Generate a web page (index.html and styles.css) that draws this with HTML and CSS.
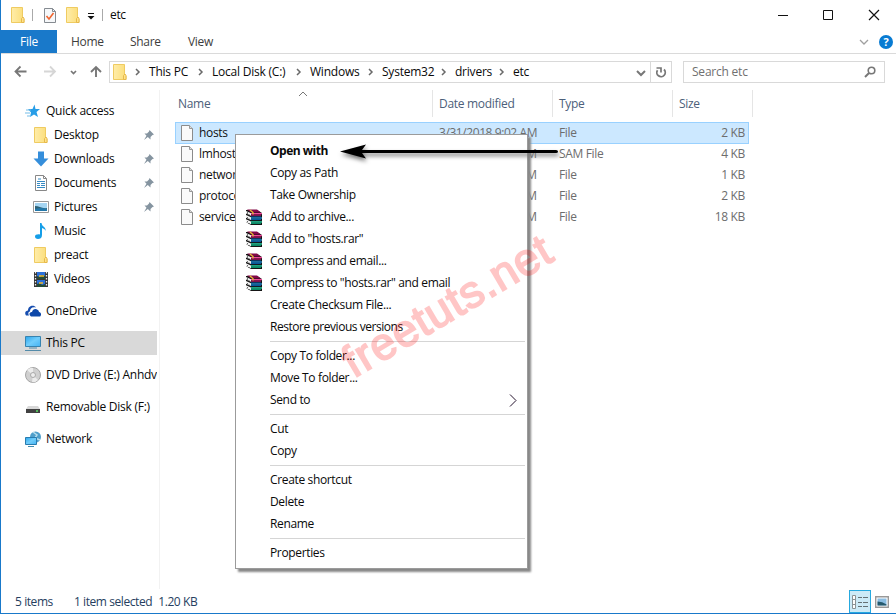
FILE: index.html
```
<!DOCTYPE html>
<html lang="en">
<head>
<meta charset="utf-8">
<title>etc</title>
<link rel="stylesheet" href="styles.css">
</head>
<body>
<svg class="defs" aria-hidden="true">
<defs>
<linearGradient id="gold" x2="1"><stop stop-color="#ffedaa"/><stop offset="1" stop-color="#fbdd78"/></linearGradient>
<linearGradient id="sky" x2="1" y2="1"><stop stop-color="#2aa5ec"/><stop offset=".5" stop-color="#71cdfb"/><stop offset="1" stop-color="#43b2f2"/></linearGradient>
<symbol id="folder" viewBox="0 0 16 18"><path d="M1.500 1.500h11v10l1.500 1.500v3.500h-12.500z" fill="url(#gold)" stroke="#efcb61"/><path d="M11.500 16.500v-4l1.500-1.500 1 1.500v4z" fill="#ffe38b" stroke="#e6b94c"/></symbol>
<symbol id="file" viewBox="0 0 14 18"><path d="M1.500 1.500h8l3 3v12h-11z" fill="#fafafa" stroke="#8b8b8b"/><path d="M9.500 1.500v3h3" fill="#ddd" stroke="#999"/></symbol>
<symbol id="pin" viewBox="0 0 12 12"><path d="M6.500 1l4.500 4.500-1.500.5-2 2v2.500L4.800 8 1 11l2.500-4.200L1.500 4.500H4l2-2z" fill="#8594a0"/></symbol>
<symbol id="chev" viewBox="0 0 6 8"><path d="M1 1l3 3-3 3" fill="none" stroke="#6a6a6a" stroke-width="1.500"/></symbol>
<symbol id="rar" viewBox="0 0 16 16">
<path d="M0 1h11l5 3v12H5l-5-3z" fill="#151515"/>
<path d="M0 2l5 2.200v2.600L0 4.600zM0 6l5 2.200v2.800L0 8.800zM0 10.200l5 2.200v2.800L0 13z" fill="#f4f4f4"/>
<path d="M1 .5h10l4 3H5z" fill="#830848"/><path d="M5 4h11v1.200H5z" fill="#ee4c9a"/><path d="M5 5.200h10v1.600H5z" fill="#9a1258"/>
<path d="M5 7.300h10v1H5z" fill="#084781"/><path d="M5 8.300h11v1.400H5z" fill="#208acb"/><path d="M5 9.700h10v1.400H5z" fill="#08569a"/>
<path d="M5 12.200h11v1.500H5z" fill="#24c69a"/><path d="M5 13.700h10V15H5z" fill="#088a65"/>
<path d="M4 1l3 2.500v2" stroke="#e4bf32" stroke-width="1.300" fill="none"/><path d="M1.500 3v2m0 3v1m0 3v1M3 5v1m0 3.500v1M3 14v1" stroke="#333" stroke-width=".7"/>
</symbol>
</defs>
</svg>
<div class="window">
<header class="titlebar">
  <svg class="tfolder" width="16" height="18"><use href="#folder"/></svg><i class="tsep"></i>
  <svg class="check" width="14" height="17" viewBox="0 0 14 17"><path d="M1.500 1.500h8l3 3v11h-11z" fill="#f6f8fa" stroke="#858b91"/><path d="M9.500 1.500v3h3" fill="none" stroke="#858b91"/><path d="M3.500 9l2.500 3 4.500-6" fill="none" stroke="#ef6530" stroke-width="1.600"/></svg>
  <svg class="tfolder2" width="16" height="18"><use href="#folder"/></svg>
  <svg class="drop" width="8" height="7" viewBox="0 0 8 7"><path d="M1 .5h6" stroke="#111"/><path d="M.5 3h7L4 6.500z" fill="#111"/></svg><i class="tsep second"></i><span class="title">etc</span>
  <div class="controls"><svg width="112" height="14" viewBox="0 0 112 14" fill="none" stroke="#111"><path d="M3 7.500h10"/><path d="M48.500 2.500h9v9h-9z"/><path d="M94 2l10 10M104 2L94 12" stroke-width="1.200"/></svg></div>
</header>
<nav class="ribbon">
  <span class="filetab">File</span><span class="home">Home</span><span class="share">Share</span><span class="view">View</span>
  <svg class="collapse" width="10" height="6" viewBox="0 0 10 6"><path d="M1 1l4 4 4-4" fill="none" stroke="#a0a0a0" stroke-width="1.300"/></svg><b class="help">?</b>
</nav>
<div class="addressrow">
  <svg class="arrows" width="94" height="16" viewBox="0 0 94 16" fill="none"><path d="M13.500 7.500H2.500m5-5l-5 5 5 5" stroke="#777" stroke-width="1.800"/><path d="M31 7.500h11m-5-5l5 5-5 5" stroke="#d6d6d6" stroke-width="1.800"/><path d="M58 7l2.500 2.500L63 7" stroke="#777" stroke-width="1.700"/><path d="M83 13V2.500M78 8l5-5 5 5" stroke="#777" stroke-width="1.900"/></svg>
  <div class="address"><svg class="afolder" width="16" height="18"><use href="#folder"/></svg>
    <svg class="c"><use href="#chev"/></svg><span class="p1">This PC</span><svg class="c"><use href="#chev"/></svg><span class="p2">Local Disk (C:)</span><svg class="c"><use href="#chev"/></svg><span class="p3">Windows</span><svg class="c"><use href="#chev"/></svg><span class="p4">System32</span><svg class="c"><use href="#chev"/></svg><span class="p5">drivers</span><svg class="c"><use href="#chev"/></svg><span class="p6">etc</span>
    <div class="refresh"><svg width="32" height="20" viewBox="0 0 32 20" fill="none" stroke="#777"><path d="M1 9l4 4 4-4" stroke-width="2"/><path d="M21.500 8.200A4.200 4.200 0 1 0 28 7.500" stroke-width="1.800"/><path d="M20.500 6h4.500v4.500" stroke-width="1.700"/></svg></div>
  </div>
  <div class="search"><span>Search etc</span><svg width="12" height="12" viewBox="0 0 12 12" fill="none" stroke="#777" stroke-width="1.600"><circle cx="7.500" cy="4.500" r="3.300"/><path d="M5 7l-4 4" stroke-width="2"/></svg></div>
</div>
<main>
<aside>
  <div class="nav root"><svg width="16" height="16" viewBox="0 0 16 16"><path d="M9.500 1.500l1 4.500H15l-3.500 3 1.500 5-4-2.500L5 14l1-4.500L3 6h4.500z" fill="#279de7"/><path d="M1 7h5M0 10h5M2 13h3" stroke="#75bde8"/></svg><span>Quick access</span></div>
  <div class="nav"><svg width="16" height="18"><use href="#folder"/></svg><span>Desktop</span><svg class="pin"><use href="#pin"/></svg></div>
  <div class="nav"><svg width="16" height="16" viewBox="0 0 16 16"><path d="M5 .5h6v7h4.500L8 15.500.5 7.500H5z" fill="#358edb"/></svg><span>Downloads</span><svg class="pin"><use href="#pin"/></svg></div>
  <div class="nav"><svg width="16" height="16" viewBox="0 0 16 16"><path d="M2.500.5h8l3 3v12h-11z" fill="#fff" stroke="#888"/><path d="M10.500.5v3h3" fill="none" stroke="#888"/><path d="M5 4h3M4 6.500h8M4 8.500h3m1 0h4M4 10.500h3m1 0h4M4 12.500h8" stroke="#378bc4"/></svg><span>Documents</span><svg class="pin"><use href="#pin"/></svg></div>
  <div class="nav"><svg width="16" height="16" viewBox="0 0 16 16"><path d="M.5 2.500h15v11H.5z" fill="#fff" stroke="#999"/><path d="M2 4h12v8H2z" fill="#a5d5f2"/><path d="M2 7c4 0 7 3 12 2v3H2z" fill="#2d6174"/><path d="M2 10q6-2 12 0v2H2z" fill="#2377a9"/></svg><span>Pictures</span><svg class="pin"><use href="#pin"/></svg></div>
  <div class="nav"><svg width="16" height="16" viewBox="0 0 16 16"><path d="M7 0h1.500c.5 4 5 4 4 8-.5-2-2-2.500-3.500-3v7c0 3-2 4-4 4s-3-1-3-2.500S4 11 7 11.500z" fill="#159ee8"/></svg><span>Music</span></div>
  <div class="nav"><svg width="16" height="18"><use href="#folder"/></svg><span>preact</span></div>
  <div class="nav"><svg width="16" height="16" viewBox="0 0 16 16"><path d="M1 1h14v15H1z" fill="#353535"/><path d="M4 1h8v7H4zM4 9h8v7H4z" fill="#2c70d8"/><path d="M4 5l3 1 2-2 3 1v3H4zM4 13l3-1 2 2 3-1v3H4z" fill="#244b37"/><path d="M6 5h5M6 12h4" stroke="#efb92c" stroke-width="1.500"/><path d="M2.500 1v15M13.500 1v15" stroke="#eee" stroke-width="1.300" stroke-dasharray="1.500 1.500"/></svg><span>Videos</span></div>
  <div class="nav root gap"><svg width="16" height="16" viewBox="0 0 16 16"><path d="M1 12.500c-2-3 0-5 2-5 0-5 6-6 8-3-4-1-6 1-6 4-2 0-2 3-1 4z" fill="#174eb0"/><path d="M6 13.500c-3-2-1-5 1-4.500 1-5 7-3 7 0 2.500 0 2.500 4 1 4.500z" fill="#0d48a9"/></svg><span>OneDrive</span></div>
  <div class="nav root gap selected"><svg width="16" height="16" viewBox="0 0 16 16"><path d="M.5 1.500h15v10H.5z" fill="url(#sky)" stroke="#3783af"/><path d="M4 13h8M0 15.500h16" stroke="#538ba9"/></svg><span>This PC</span></div>
  <div class="nav root gap"><svg width="16" height="16" viewBox="0 0 16 16"><circle cx="8" cy="8" r="7.500" fill="#d0d0d0" stroke="#a5a5a5"/><path d="M8 8L2 3q4-3 6-2zM8 8l5 5q-3 3-6 2z" fill="#ececec"/><circle cx="8" cy="8" r="2.500" fill="#eee" stroke="#aaa"/></svg><span>DVD Drive (E:) Anhdv</span></div>
  <div class="nav root gap"><svg width="16" height="16" viewBox="0 0 16 16"><path d="M3 7h10l2 3H1z" fill="#d8d8d8"/><path d="M1 10h14v4H1z" fill="#414141"/><path d="M11 12h2" stroke="#59df62" stroke-width="1.500"/></svg><span>Removable Disk (F:)</span></div>
  <div class="nav root gap"><svg width="16" height="16" viewBox="0 0 16 16"><circle cx="10.500" cy="6" r="5.500" fill="#4f9fcb"/><path d="M8 1l4 3-2 3 5 2" fill="none" stroke="#b7ddec" stroke-width="1.500"/><path d="M.5 6.500h11v7H.5z" fill="url(#sky)" stroke="#287caf"/><path d="M3 15.500h6" stroke="#428caf"/></svg><span>Network</span></div>
</aside>
<section class="content">
  <svg class="sort" width="10" height="6" viewBox="0 0 10 6"><path d="M1 5l4-4 4 4" fill="none" stroke="#777"/></svg>
  <div class="columns"><span>Name</span><span>Date modified</span><span>Type</span><span>Size</span></div>
  <div class="files">
    <div class="row picked"><svg><use href="#file"/></svg><span>hosts</span><span>3/31/2018 9:02 AM</span><span>File</span><span>2 KB</span></div>
    <div class="row"><svg><use href="#file"/></svg><span>lmhosts.sam</span><span>3/18/2017 9:01 PM</span><span>SAM File</span><span>4 KB</span></div>
    <div class="row"><svg><use href="#file"/></svg><span>networks</span><span>3/18/2017 9:01 PM</span><span>File</span><span>1 KB</span></div>
    <div class="row"><svg><use href="#file"/></svg><span>protocol</span><span>3/18/2017 9:01 PM</span><span>File</span><span>2 KB</span></div>
    <div class="row"><svg><use href="#file"/></svg><span>services</span><span>3/18/2017 9:01 PM</span><span>File</span><span>18 KB</span></div>
  </div>
</section>
</main>
<footer><span class="count">5 items</span><span class="chosen">1 item selected</span><span class="size">1.20 KB</span>
  <div class="details"><svg width="18" height="16" viewBox="0 0 18 16"><path d="M1.500 1.500h3v13h-3zM1.500 5.500h3M1.500 10.500h3" fill="#fff" stroke="#8a9295"/><path d="M7 3.500h4m1 0h5M7 8.500h4m1 0h5M7 12.500h4m1 0h5" stroke="#667175"/></svg></div>
  <svg class="preview" width="14" height="12" viewBox="0 0 14 12"><path d="M.7.7h12.600v10.600H.7z" fill="#fff" stroke="#999" stroke-width="1.400"/><path d="M2.500 2.500h9v7h-9z" fill="#8abde2"/><path d="M2.500 5.500q5 0 9 3v1h-9z" fill="#25596d"/></svg>
</footer>
</div>
<div class="menu">
  <div class="strong"><span>Open with</span></div><div><span>Copy as Path</span></div><div><span>Take Ownership</span></div>
  <div><svg><use href="#rar"/></svg><span>Add to archive...</span></div><div><svg><use href="#rar"/></svg><span>Add to "hosts.rar"</span></div><div><svg><use href="#rar"/></svg><span>Compress and email...</span></div><div><svg><use href="#rar"/></svg><span>Compress to "hosts.rar" and email</span></div>
  <div><span>Create Checksum File...</span></div><div class="restore"><span>Restore previous versions</span></div><hr>
  <div><span>Copy To folder...</span></div><div><span>Move To folder...</span></div><div><span>Send to</span><svg class="more" viewBox="0 0 8 13"><path d="M1 .5l6 6-6 6" fill="none" stroke="#24132d"/></svg></div><hr>
  <div><span>Cut</span></div><div><span>Copy</span></div><hr>
  <div><span>Create shortcut</span></div><div><span>Delete</span></div><div><span>Rename</span></div><hr>
  <div><span>Properties</span></div>
</div>
<div class="watermark">freetuts.net</div>
<svg class="pointer" width="226" height="28" viewBox="0 0 226 28"><path d="M2 11.500L28 4.500l-4 5.500h194q2 0 2 1.500t-2 1.500H24l4 5.500z" fill="#000"/></svg>
</body>
</html>
```
FILE: styles.css
```
* { box-sizing: border-box; }
body { margin: 0; width: 896px; height: 614px; overflow: hidden; position: relative; background: #fff; color: #0a0a0a; font: 12px/16px "Open Sans", "Noto Sans", sans-serif; letter-spacing: -.35px; }
svg { display: block; flex: none; }
span { white-space: nowrap; }
.defs { position: absolute; width: 0; height: 0; }
.window { width: 896px; height: 614px; border-left: 1px solid #1979ca; border-bottom: 1px solid #1979ca; display: flex; flex-direction: column; }
.titlebar { height: 30px; display: flex; align-items: center; padding-left: 9px; }
.tsep { width: 1px; height: 12px; background: #aaa; margin-left: 6px; }
.check { margin-left: 10px; }
.tfolder2 { margin-left: 8px; }
.drop { margin-left: 6px; margin-top: 3px; }
.second { margin-left: 7px; }
.title { margin-left: 7px; }
.controls { margin-left: auto; width: 121px; }
.ribbon { height: 24px; border-bottom: 1px solid #dadada; display: flex; align-items: center; color: #3d3d3d; letter-spacing: -.3px; }
.filetab { width: 56px; height: 23px; line-height: 24px; text-align: center; background: #1979ca; color: #fff; }
.home { width: 59px; padding-left: 14px; }
.share { width: 58px; padding-left: 14px; }
.view { padding-left: 14px; }
.collapse { margin-left: auto; margin-right: 10px; }
.help { width: 14px; height: 14px; margin-right: 3px; border-radius: 50%; background: #087bd2; color: #fff; text-align: center; line-height: 14px; font-size: 11px; }
.addressrow { height: 36px; display: flex; align-items: center; padding-left: 12px; letter-spacing: -.22px; }
.address { margin-left: 2px; width: 563px; height: 22px; border: 1px solid #d9d9d9; display: flex; align-items: center; }
.afolder { margin-left: 2px; margin-right: 7px; }
.c { width: 6px; height: 8px; margin: 0 8px 0 0; }
.p1 { width: 49px; } .p2 { width: 84px; } .p3 { width: 58px; } .p4 { width: 59px; } .p5 { width: 44px; }
.refresh { margin-left: auto; padding-right: 3px; background: linear-gradient(#d9d9d9, #d9d9d9) 14px 0/1px 20px no-repeat; height: 20px; }
.search { width: 202px; height: 22px; margin-left: 11px; border: 1px solid #d9d9d9; display: flex; align-items: center; justify-content: space-between; padding: 0 8px; color: #707070; }
main { flex: 1; display: flex; min-height: 0; }
aside { width: 159px; border-right: 1px solid #f2f2f2; padding-top: 9px; height: 499px; }
.nav { height: 24px; display: flex; align-items: center; padding-left: 32px; letter-spacing: -.22px; }
.nav > span { margin-left: 5px; }
.pin { width: 12px; height: 12px; margin-left: auto; margin-right: 4px; }
.root { padding-left: 24px; width: 156px; overflow: hidden; letter-spacing: -.25px; }
.gap { margin-top: 8px; }
.selected { background: #d9d9d9; }
.content { position: relative; flex: 1; padding-left: 15px; }
.sort { position: absolute; left: 138px; top: 1px; }
.columns { height: 26px; display: grid; grid-template-columns: 258px 120px 120px 80px; color: #4c607a; letter-spacing: -.3px; }
.columns span { line-height: 27px; border-right: 1px solid #e5e5e5; padding-left: 6px; }
.columns span:first-child { padding-left: 3px; }
.files { padding-top: 6px; }
.row { height: 21px; width: 574px; display: grid; grid-template-columns: 5px 19px 240px 120px 101px 85px; align-items: center; color: #6d6d6d; }
.row svg { width: 14px; height: 18px; grid-column: 2; }
.row span:nth-of-type(1) { color: #111; }
.row span:nth-of-type(2) { letter-spacing: -.42px; }
.row span:last-child { text-align: right; }
.picked { background: #cce8ff; outline: 1px solid #99d1ff; outline-offset: -1px; height: 22px; margin-bottom: -1px; }
footer { height: 24px; display: flex; align-items: center; color: #263e60; padding: 1px 0 0 14px; letter-spacing: -.42px; }
.chosen { margin-left: 21px; } .size { margin-left: 6px; }
.details { margin-left: auto; width: 22px; height: 23px; border: 1px solid #26a9df; background: #cceaf7; display: grid; place-items: center; }
.preview { margin-left: 4px; margin-right: 7px; }
.menu { position: absolute; left: 235px; top: 134px; width: 293px; height: 435px; border: 1px solid #9b9b9b; background: #fff; padding: 5px 2px; box-shadow: 3px 3px 2px #888; }
.menu div { height: 22px; display: grid; grid-template-columns: 32px 1fr 10px; align-items: center; }
.menu span { grid-column: 2; grid-row: 1; }
.menu svg { width: 16px; height: 16px; margin-left: 8px; grid-row: 1; }
.menu .more { width: 8px; height: 13px; grid-column: 3; margin-left: -6px; }
.menu hr { height: 1px; border: 0; background: #d5d5d5; margin: 3px 0 3px 32px; }
.restore { letter-spacing: -.46px; }
.strong { font-weight: bold; letter-spacing: -.5px; }
.watermark { position: absolute; left: 330px; top: 281px; color: #f00; opacity: .22; font: 45px/50px "Liberation Sans", sans-serif; letter-spacing: .8px; transform: rotate(-30.5deg); -webkit-text-stroke: 1.8px #f00; }
.pointer { position: absolute; left: 338px; top: 140px; filter: drop-shadow(1px 3px 2px #777); }
```
